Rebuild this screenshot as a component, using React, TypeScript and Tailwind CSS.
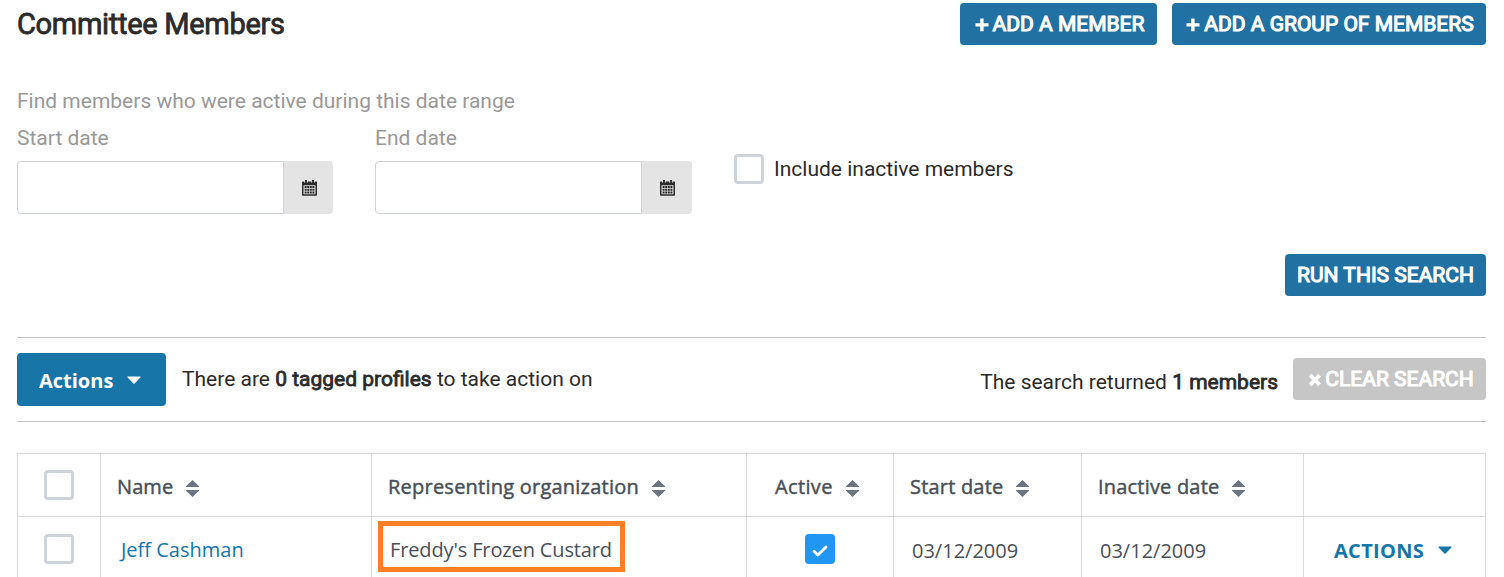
import React from 'react';
import { clsx } from 'clsx';

const ROBOTO = "font-['Roboto',sans-serif]";
const SANS = "font-['Open_Sans','Noto_Sans',sans-serif]";

// --- ICÔNES ---
const CalendarIcon = () => (
    <svg width="15" height="16" viewBox="0 0 15 16">
        <path fill="#2b2b2b" d="M3 0h2v1.5h5V0h2v1.5h2.2c.5 0 .8.3.8.8v12.4c0 .7-.4 1.1-1 1.1H1c-.6 0-1-.4-1-1.1V2.3c0-.5.3-.8.8-.8H3z" />
        <path fill="#e4e4e4" d="M2.3.8h.8v2h-.8zM4.9.8h.8v2h-.8zM9.3.8h.8v2h-.8zM11.9.8h.8v2h-.8zM1.5 5.3h12v9h-12z" />
        <path fill="#2b2b2b" d="M2.6 6h2v2h-2zM5.2 6h2v2h-2zM7.8 6h2v2h-2zM10.4 6h2v2h-2zM2.6 8.7h2v2h-2zM5.2 8.7h2v2h-2zM7.8 8.7h2v2h-2zM10.4 8.7h2v2h-2zM2.6 11.4h2v2h-2zM5.2 11.4h2v2h-2zM7.8 11.4h2v2h-2zM10.4 11.4h2v2h-2z" />
    </svg>
);

const PlusIcon = () => (
    <svg width="14" height="14" viewBox="0 0 14 14" className="mr-1">
        <path fill="#fff" d="M5.2 0.5h3.4v4.7H13.5v3.2H8.6v4.8H5.2V8.4H.5V5.2h4.7z" />
    </svg>
);

const CrossIcon = () => (
    <svg width="14" height="14" viewBox="0 0 14 14" className="mr-[3px]">
        <path fill="none" stroke="#fff" strokeWidth="3.8" d="M2.2 2.2l9.4 9.6M11.6 2.2L2.2 11.8" />
    </svg>
);

const Caret = ({ className }: { className?: string }) => (
    <svg width="14" height="8" viewBox="0 0 14 8" className={className}>
        <path fill="currentColor" d="M1 0.5h12c.6 0 .8.6.4 1L7.6 7.4c-.3.3-.9.3-1.2 0L.6 1.5C.2 1.1.4.5 1 .5z" />
    </svg>
);

const SortIcon = () => (
    <svg width="13" height="17" viewBox="0 0 13 17" className="mt-[7px] flex-shrink-0">
        <path fill="#6c757d" d="M6.5 0L13 6.2V7H0v-.8zM0 10h13v.8L6.5 17 0 10.8z" />
    </svg>
);

// --- CASE À COCHER ---
const Checkbox = ({ checked = false }: { checked?: boolean }) => (
    <span
        className={clsx(
            'flex h-[30px] w-[30px] flex-shrink-0 items-center justify-center rounded-[4px]',
            checked ? 'bg-[#2196f3]' : 'border-[3px] border-[#ced4da] bg-white'
        )}
    >
        {checked && (
            <svg width="16" height="12" viewBox="0 0 16 12" className="mt-[3px]">
                <path fill="none" stroke="#fff" strokeWidth="2.8" strokeLinejoin="round" strokeLinecap="round" d="M2 6.2l3.9 3.7L14 2" />
            </svg>
        )}
    </span>
);

const DateField = ({ label, className }: { label: string; className: string }) => (
    <label className={clsx('block', className)}>
        <span className="block h-[42px] pt-[3px] text-[21px] leading-[32px] text-[#999]">{label}</span>
        <span className="flex h-[53px]">
            <span className="w-[267px] rounded-l-[4px] border border-[#ced4da] bg-white" />
            <span className="flex flex-1 items-center justify-center rounded-r-[4px] bg-[#e4e4e4] pl-px pt-px">
                <CalendarIcon />
            </span>
        </span>
    </label>
);

const Button = ({ className, children }: { className: string; children: React.ReactNode }) => (
    <button
        className={clsx(
            'flex h-[42px] items-center justify-center rounded-[4px] pt-[2px] text-[21px] text-white [-webkit-text-stroke:1.1px_white]',
            className
        )}
    >
        {children}
    </button>
);

const COLUMNS = [
    { label: 'Name', tracking: 'tracking-[0.1px]', cell: 'pl-4' },
    { label: 'Representing organization', tracking: 'tracking-[0.23px]', cell: 'pl-4' },
    { label: 'Active', tracking: 'tracking-[0.35px]', cell: 'pl-[28px]' },
    { label: 'Start date', tracking: 'tracking-[0.2px]', cell: 'pl-4' },
    { label: 'Inactive date', tracking: 'tracking-[0.2px]', cell: 'pl-4' },
];

const GRID = 'grid grid-cols-[83px_271px_375px_147px_188px_222px_182px]';
const CELL = 'flex items-center border-r border-[#d9d9d9]';

export default function App() {
    return (
        <div className={clsx('h-[577px] w-[1504px] overflow-hidden bg-white pl-[17px] pr-[18px] pt-[3px] text-[#2b2b2b]', ROBOTO)}>
            {/* En-tête */}
            <header className="flex h-[42px] justify-between">
                <h1 className="whitespace-nowrap text-[29px] leading-[42px] tracking-[-0.3px] [-webkit-text-stroke:0.8px_#2b2b2b]">Committee Members</h1>
                <div className="flex gap-[15px]">
                    <Button className="w-[197px] bg-[#2271a3] pl-[2px]"><PlusIcon />ADD A MEMBER</Button>
                    <Button className="w-[314px] bg-[#2271a3] pl-[2px]"><PlusIcon />ADD A GROUP OF MEMBERS</Button>
                </div>
            </header>

            {/* Filtres */}
            <p className="mt-[40px] h-[34px] text-[21px] leading-[32px] text-[#999]">Find members who were active during this date range</p>
            <div className="flex h-[95px]">
                <DateField label="Start date" className="w-[316px]" />
                <DateField label="End date" className="ml-[42px] w-[317px]" />
                <div className="ml-[42px] mt-[35px] flex h-[30px] items-center gap-[10px] text-[21px]">
                    <Checkbox />
                    <span className="mt-[2px]">Include inactive members</span>
                </div>
            </div>
            <div className="mt-[40px] flex justify-end">
                <Button className="w-[201px] bg-[#2271a3]">RUN THIS SEARCH</Button>
            </div>

            {/* Barre d'actions */}
            <div className="mt-[41px] flex h-[85px] items-center border-y border-[#c4c4c4] text-[21px]">
                <button className={clsx('flex h-[53px] w-[149px] items-center gap-[14px] rounded-[4px] bg-[#1875a8] pl-[22px] pt-[3px] text-[20px] font-bold text-white', SANS)}>
                    Actions<Caret className="mb-[3px]" />
                </button>
                <span className="ml-4">There are <span className="[-webkit-text-stroke:0.8px_#2b2b2b]">0 tagged profiles</span> to take action on</span>
                <span className="ml-auto mt-[6px]">The search returned <span className="[-webkit-text-stroke:0.8px_#2b2b2b]">1 members</span></span>
                <div className="-mt-px ml-[15px] mb-px"><Button className="w-[193px] bg-[#c6c6c6] pl-[3px]"><CrossIcon />CLEAR SEARCH</Button></div>
            </div>

            {/* Tableau des membres */}
            <div className={clsx('mt-[31px] border-l border-t border-[#d9d9d9] text-[20px] text-[#495057]', SANS)}>
                <div className={clsx(GRID, 'h-[63px] border-b border-[#d9d9d9]')}>
                    <div className={clsx(CELL, 'justify-center')}><Checkbox /></div>
                    {COLUMNS.map((col) => (
                        <div key={col.label} className={clsx(CELL, col.cell, 'gap-[13px] whitespace-nowrap font-medium')}>
                            <span className={clsx('mt-1 [-webkit-text-stroke:0.45px_#495057]', col.tracking)}>{col.label}</span>
                            <SortIcon />
                        </div>
                    ))}
                    <div className={CELL} />
                </div>
                <div className={clsx(GRID, 'h-[64px]')}>
                    <div className={clsx(CELL, 'justify-center')}><Checkbox /></div>
                    <div className={clsx(CELL, 'pl-5 pt-px text-[#1875a8]')}>Jeff Cashman</div>
                    <div className={clsx(CELL, 'pb-[5px] pl-[6px]')}>
                        <span className="flex h-[51px] w-[247px] items-center whitespace-nowrap border-[5px] border-[#ff7f27] pl-[7px] pt-[6px] tracking-[-0.13px]">Freddy's Frozen Custard</span>
                    </div>
                    <div className={clsx(CELL, 'justify-center')}><Checkbox checked /></div>
                    <div className={clsx(CELL, 'pl-[18px] pt-[4px]')}>03/12/2009</div>
                    <div className={clsx(CELL, 'pl-[18px] pt-[4px]')}>03/12/2009</div>
                    <div className={clsx(CELL, 'gap-[14px] pl-[30px] pt-[4px] font-bold tracking-[0.3px] text-[#1875a8]')}>ACTIONS<Caret className="mb-[3px]" /></div>
                </div>
            </div>
        </div>
    );
}
